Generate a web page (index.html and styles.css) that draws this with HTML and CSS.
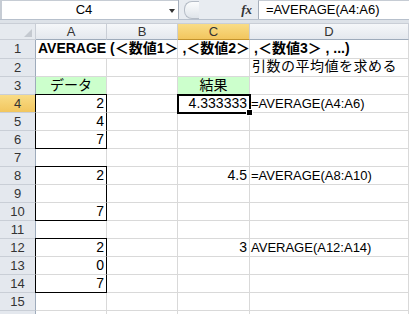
FILE: index.html
```html
<!DOCTYPE html>
<html lang="ja">
<head>
  <meta charset="UTF-8">
  <title>AVERAGE</title>
  <link rel="stylesheet" href="styles.css">
</head>
<body>
  <!-- 数式バー -->
  <div class="formula-bar">
    <div class="name-box">C4</div>
    <div class="name-arrow"></div>
    <div class="bar-tools">
      <span class="round-btn"></span>
      <span class="fx">fx</span>
    </div>
    <div class="formula-input">=AVERAGE(A4:A6)</div>
  </div>
  <div class="bar-gap"></div>

  <!-- シート -->
  <div class="sheet">
    <div class="corner"><span class="corner-tri"></span></div>
    <div class="col-head">A</div>
    <div class="col-head">B</div>
    <div class="col-head active">C</div>
    <div class="col-head">D</div>

    <div class="row-head">1</div>
    <div class="cell title">AVERAGE (＜数値1＞ ,＜数値2＞ ,＜数値3＞ , ...)</div>
    <div class="cell"></div>
    <div class="cell"></div>
    <div class="cell"></div>

    <div class="row-head">2</div>
    <div class="cell"></div>
    <div class="cell"></div>
    <div class="cell"></div>
    <div class="cell note">引数の平均値を求める</div>

    <div class="row-head">3</div>
    <div class="cell label">データ</div>
    <div class="cell"></div>
    <div class="cell label">結果</div>
    <div class="cell"></div>

    <div class="row-head active">4</div>
    <div class="cell num box-top">2</div>
    <div class="cell"></div>
    <div class="cell num selected">4.333333<span class="handle"></span></div>
    <div class="cell text">=AVERAGE(A4:A6)</div>

    <div class="row-head">5</div>
    <div class="cell num box-mid">4</div>
    <div class="cell"></div>
    <div class="cell"></div>
    <div class="cell"></div>

    <div class="row-head">6</div>
    <div class="cell num box-bottom">7</div>
    <div class="cell"></div>
    <div class="cell"></div>
    <div class="cell"></div>

    <div class="row-head">7</div>
    <div class="cell"></div>
    <div class="cell"></div>
    <div class="cell"></div>
    <div class="cell"></div>

    <div class="row-head">8</div>
    <div class="cell num box-top">2</div>
    <div class="cell"></div>
    <div class="cell num">4.5</div>
    <div class="cell text">=AVERAGE(A8:A10)</div>

    <div class="row-head">9</div>
    <div class="cell num box-mid"></div>
    <div class="cell"></div>
    <div class="cell"></div>
    <div class="cell"></div>

    <div class="row-head">10</div>
    <div class="cell num box-bottom">7</div>
    <div class="cell"></div>
    <div class="cell"></div>
    <div class="cell"></div>

    <div class="row-head">11</div>
    <div class="cell"></div>
    <div class="cell"></div>
    <div class="cell"></div>
    <div class="cell"></div>

    <div class="row-head">12</div>
    <div class="cell num box-top">2</div>
    <div class="cell"></div>
    <div class="cell num">3</div>
    <div class="cell text">AVERAGE(A12:A14)</div>

    <div class="row-head">13</div>
    <div class="cell num box-mid">0</div>
    <div class="cell"></div>
    <div class="cell"></div>
    <div class="cell"></div>

    <div class="row-head">14</div>
    <div class="cell num box-bottom">7</div>
    <div class="cell"></div>
    <div class="cell"></div>
    <div class="cell"></div>

    <div class="row-head">15</div>
    <div class="cell"></div>
    <div class="cell"></div>
    <div class="cell"></div>
    <div class="cell"></div>

    <div class="row-head"></div>
    <div class="cell"></div>
    <div class="cell"></div>
    <div class="cell"></div>
    <div class="cell"></div>
  </div>
</body>
</html>
```

FILE: styles.css
```css
body {
  margin: 0;
  background: #ffffff;
  font-family: "Liberation Sans", "Noto Sans CJK JP", sans-serif;
  font-size: 13px;
  color: #000;
  overflow: hidden;
}

/* 数式バー */
.formula-bar {
  display: flex;
  height: 20px;
  background: #e8ecf1;
  border-bottom: 1px solid #b7c0cc;
  box-sizing: border-box;
}
.name-box {
  width: 164px;
  background: #fff;
  border-left: 2px solid #c6ccd4;
  border-top: 1px solid #c6ccd4;
  text-align: center;
  line-height: 18px;
  font-size: 13px;
}
.name-arrow {
  width: 12px;
  background: #fff;
  border-top: 1px solid #c6ccd4;
  position: relative;
}
.name-arrow::after {
  content: "";
  position: absolute;
  left: 3px;
  top: 8px;
  border-left: 3px solid transparent;
  border-right: 3px solid transparent;
  border-top: 4px solid #333;
}
.bar-tools {
  width: 79px;
  display: flex;
  align-items: center;
  border-left: 1px solid #a5aebb;
}
.round-btn {
  width: 14px;
  height: 16px;
  margin-left: 5px;
  border-radius: 8px 0 0 8px;
  border: 1px solid #b5bcc6;
  border-right: none;
  background: linear-gradient(#fbfcfd, #dfe4ea);
}
.fx {
  margin-left: auto;
  margin-right: 6px;
  font-family: "Liberation Serif", serif;
  font-style: italic;
  font-weight: bold;
  font-size: 13px;
  color: #333;
}
.formula-input {
  flex: 1;
  background: #fff;
  border-left: 1px solid #a5aebb;
  border-top: 1px solid #c6ccd4;
  padding-left: 7px;
  line-height: 18px;
  font-size: 13px;
}
.bar-gap {
  height: 3px;
  background: #dde2e8;
  border-bottom: 1px solid #c9ced6;
}

/* シート */
.sheet {
  display: grid;
  grid-template-columns: 36px 71px 71px 72px 1fr;
  grid-template-rows: 16px 19px repeat(15, 18px);
}
.corner {
  background: #e6eaef;
  border-right: 1px solid #c9ced6;
  border-bottom: 1px solid #c9ced6;
  position: relative;
}
.corner-tri {
  position: absolute;
  right: 3px;
  bottom: 2px;
  border-left: 8px solid transparent;
  border-bottom: 8px solid #c4c9d0;
}
.col-head {
  background: linear-gradient(#f5f7f9, #e4e8ee);
  border-right: 1px solid #c9ced6;
  border-bottom: 1px solid #9eabbb;
  text-align: center;
  line-height: 15px;
  color: #333;
  font-size: 13px;
}
.col-head.active {
  background: linear-gradient(#f9dc86, #f2c65e);
  border-bottom-color: #c2922c;
}
.row-head {
  background: #e4e8ee;
  border-right: 1px solid #9eabbb;
  border-bottom: 1px solid #c9ced6;
  text-align: center;
  line-height: 17px;
  color: #333;
  font-size: 13px;
}
.row-head.active {
  background: linear-gradient(#f9dc86, #f2c65e);
}
.cell {
  border-right: 1px solid #d9d9d9;
  border-bottom: 1px solid #d9d9d9;
  line-height: 17px;
  white-space: nowrap;
  position: relative;
}
.title {
  font-weight: bold;
  font-size: 14px;
  padding-left: 2px;
  overflow: visible;
  z-index: 1;
  border-right: none;
}
.note {
  font-size: 14px;
  line-height: 14px;
  padding-left: 2px;
  letter-spacing: 0.5px;
}
.label {
  background: #ccffcc;
  text-align: center;
  font-size: 14px;
}
.num {
  text-align: right;
  padding-right: 2px;
  font-size: 14px;
}
.text {
  padding-left: 1px;
}

/* 罫線 */
.box-top,
.box-mid,
.box-bottom {
  border-left: 1px solid #000;
  border-right: 1px solid #000;
  margin-left: -1px;
}
.box-top {
  border-top: 1px solid #000;
  margin-top: -1px;
}
.box-bottom {
  border-bottom: 1px solid #000;
}

/* 選択セル */
.selected {
  outline: 2px solid #000;
  outline-offset: -1px;
  z-index: 2;
}
.handle {
  position: absolute;
  right: -4px;
  bottom: -4px;
  width: 5px;
  height: 5px;
  background: #000;
  border: 1px solid #fff;
}
```
